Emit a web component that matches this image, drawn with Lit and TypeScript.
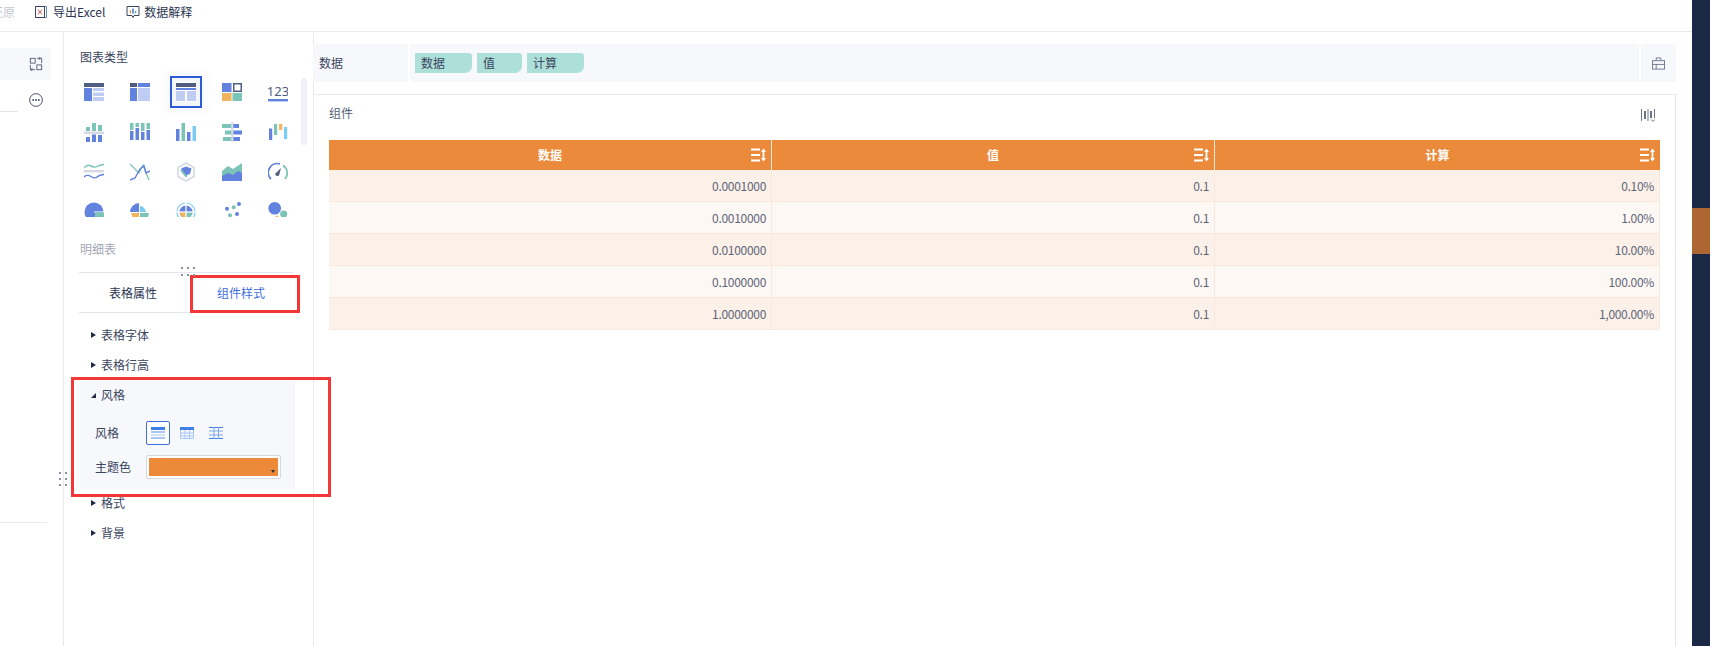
import { LitElement, html, css, svg } from "lit";
import { customElement } from "lit/decorators.js";

const B = "#6282e0", L = "#bfcdf5", D = "#4f5e80", T = "#7cc4b8", O = "#f0b45f", S = "#7ccbf5", G = "#d5d9e3";

const r = (x: number, y: number, w: number, h: number, f: string) =>
  svg`<rect x=${x} y=${y} width=${w} height=${h} fill=${f}></rect>`;

const chartIcons = [
  svg`${r(0,1,20,4,D)}${r(0,6,8,13,B)}${r(9,6,11,3,L)}${r(9,10.5,11,3.5,L)}${r(9,15,11,4,L)}`,
  svg`${r(0,1,7,4,D)}${r(8,1,12,4,B)}${r(0,6,7,13,B)}${r(8,6,12,13,L)}`,
  svg`${r(0,1,20,4,D)}${r(0,6,20,2,B)}${r(0,9,9,10,L)}${r(11,9,9,10,L)}`,
  svg`${r(0,1,9.5,9,B)}${r(11,1,9,9,D)}${r(12.5,2.5,6,6,"#fff")}${r(0,11,9.5,8,O)}${r(10.5,11,9.5,8,T)}`,
  svg`<text x="10" y="13.500" text-anchor="middle" class="num">123</text>${r(0,17,20,2.4,B)}`,

  svg`${r(2,5,4,4,T)}${r(8,1,4,8,T)}${r(14,3,4,6,T)}${r(0,9.5,20,2.5,G)}${r(2,15,4,5,B)}${r(8,12.5,4,7.5,B)}${r(14,13,4,7,B)}`,
  svg`${r(0,1,3.5,7,T)}${r(5.5,1,3.5,4,T)}${r(11,1,3.5,8,T)}${r(16.5,1,3.5,6,T)}${r(0,9,3.5,9,B)}${r(5.5,6,3.5,12,B)}${r(11,10,3.5,8,B)}${r(16.5,8,3.5,10,B)}`,
  svg`${r(0,7,3.5,12,B)}${r(5.5,1,3.5,18,T)}${r(11,10,3.5,9,B)}${r(16.5,4,3.5,15,S)}`,
  svg`${r(0,2,10,4,T)}${r(3,8.5,7,4,T)}${r(1,15,9,4,T)}${r(11,2,6,4,B)}${r(11,8.5,9,4,B)}${r(11,15,7,4,B)}${r(9.2,0,2.2,20,G)}`,
  svg`${r(1,6.500,3.2,11.5,B)}${r(6,2,3.2,11,T)}${r(11,2,3.2,6,O)}${r(16,5,3.2,12,S)}`,

  svg`<path d="M0 6 Q3 2 7 4 T13 4.500 T20 2.500" fill="none" stroke=${T} stroke-width="1.4"></path>${r(0,8,20,2.4,G)}<path d="M0 15 Q3 12 7 14.500 T13 15 T20 12.500" fill="none" stroke=${B} stroke-width="1.4"></path>`,
  svg`<path d="M0 2 L9 11 L13 3 L19 18" fill="none" stroke=${T} stroke-width="1.3"></path><path d="M0 18 L5 16 L10 7 L14 4 L16 11 L20 9" fill="none" stroke=${B} stroke-width="1.4"></path>`,
  svg`<path d="M10 1 L18 5.5 V14.5 L10 19 L2 14.5 V5.5 Z" fill="none" stroke=${G} stroke-width="1.6"></path><path d="M10 16 L4 8 L15 6 Z" fill=${T}></path><path d="M5 6.5 L10 4.5 L15.5 6.5 L14 12 L10 13 Z" fill=${B}></path>`,
  svg`<path d="M0 9 L6 4 L11 7 L17 3 L20 1 V14 H0 Z" fill=${T}></path><path d="M0 14 L6 11 L11 13 L16 9 L20 11 V19 H0 Z" fill=${B}></path>`,
  svg`<path d="M3 17 A9 9 0 0 1 12 2" fill="none" stroke=${B} stroke-width="1.8"></path><path d="M15 3.5 A9 9 0 0 1 17 17" fill="none" stroke=${T} stroke-width="1.8"></path><path d="M7 12 L13 6 L11 13.5 A2.7 2.7 0 0 1 7 12 Z" fill=${D}></path>`,

  svg`<circle cx="10" cy="10" r="9.500" fill=${B}></circle>${r(10,9.5,10,1,"#fff")}${r(11,10.5,9,9.5,T)}`,
  svg`<path d="M9 1 A9.5 9.5 0 0 0 0 10 H9 Z" fill=${B}></path><path d="M10 4 A6.500 6.500 0 0 1 16 10 H10 Z" fill=${S}></path><path d="M1 11 H9 V19 H4 Z" fill=${O}></path><path d="M10 11 H19 L17 19 H10 Z" fill=${T}></path>`,
  svg`<circle cx="10" cy="10" r="9" fill="none" stroke=${S} stroke-width="1.200"></circle><circle cx="10" cy="10" r="6.500" fill=${B}></circle><path d="M10 10 H16.500 A6.500 6.500 0 0 1 10 16.500 Z" fill=${T}></path><path d="M10 10 V16.500 A6.500 6.500 0 0 1 3.500 10 Z" fill=${O}></path>${r(9.4,0,1.2,20,"#fff")}${r(0,9.4,20,1.2,"#fff")}`,
  svg`<circle cx="17" cy="2" r="2" fill=${B}></circle><circle cx="11.700" cy="5.300" r="2" fill=${T}></circle><circle cx="5" cy="6.700" r="2" fill=${B}></circle><circle cx="15" cy="12" r="2" fill=${B}></circle><circle cx="8" cy="13.300" r="2" fill=${T}></circle>`,
  svg`<circle cx="6.700" cy="6.300" r="6.300" fill=${B}></circle><circle cx="15.700" cy="12" r="3.600" fill=${T}></circle><circle cx="9" cy="15" r="1.500" fill=${O}></circle>`,
];

const SortIcon = svg`<svg class="sort" width="15" height="14" viewBox="0 0 15 14"><path d="M0 1.500h9M0 7h9M0 12.500h9" stroke="#fff" stroke-width="1.800" fill="none"></path><path d="M12.500 2v10" stroke="#fff" stroke-width="1.800"></path><path d="M10 4 12.500 .5 15 4zM10 10 12.500 13.500 15 10z" fill="#fff"></path></svg>`;

const rows = [
  ["0.0001000", "0.1", "0.10%"],
  ["0.0010000", "0.1", "1.00%"],
  ["0.0100000", "0.1", "10.00%"],
  ["0.1000000", "0.1", "100.00%"],
  ["1.0000000", "0.1", "1,000.00%"],
];

@customElement("app-root")
export class AppRoot extends LitElement {
  static styles = css`
    :host {
      display: block;
      width: 1710px;
      height: 646px;
      overflow: hidden;
      position: relative;
      background: #fff;
      font-family: "Noto Sans CJK SC", "Noto Sans", sans-serif;
      font-size: 12px;
      color: #2c3650;
      line-height: 16px;
    }
    .page { display: flex; height: 646px; }
    .work { width: 1692px; display: flex; flex-direction: column; }
    .side { width: 18px; background: #1b2845; padding-top: 208px; box-sizing: border-box; }
    .side-mark { height: 46px; background: #ae6632; }

    .toolbar { height: 24px; padding-bottom: 7px; border-bottom: 1px solid #e7e9ef; display: flex; align-items: center; box-sizing: content-box; flex: none; }
    .tb-clip { width: 15px; overflow: hidden; display: flex; justify-content: flex-end; color: #c4c8d2; white-space: nowrap; }
    .tb-item { display: flex; align-items: center; color: #2c3650; }
    .tb-excel { margin-left: 19px; gap: 5px; }
    .tb-explain { margin-left: 21px; gap: 4px; }

    .body { flex: 1; display: flex; min-height: 0; }
    .left { width: 63px; border-right: 1px solid #e7e9ef; padding-top: 16px; flex: none; box-sizing: content-box; }
    .left-row { width: 51px; height: 32px; background: #f7f8fc; display: flex; align-items: center; justify-content: flex-end; padding-right: 8px; box-sizing: border-box; }
    .left-more { width: 51px; height: 31px; display: flex; align-items: flex-end; justify-content: flex-end; padding: 0 8px 4px 0; box-sizing: border-box; }
    .left-rule { width: 18px; height: 1px; background: #e0e3ea; }
    .left-rule2 { width: 47px; height: 1px; background: #e7e9ef; margin-top: 410px; }

    .panel { width: 249px; border-right: 1px solid #e7e9ef; flex: none; box-sizing: content-box; padding-top: 17px; position: relative; }
    .title { padding-left: 16px; height: 16px; color: #3b4560; }
    .gridwrap { height: 152px; overflow: hidden; padding: 7px 0 0 7px; box-sizing: border-box; position: relative; }
    .charts { display: grid; grid-template-columns: repeat(5, 46px); grid-auto-rows: 40px; }
    .chart { display: flex; align-items: center; justify-content: center; }
    .chart.sel svg { outline: 2px solid #2d5bd7; outline-offset: 4px; box-shadow: 0 0 10px 8px rgba(90, 110, 170, 0.08); }
    .num { font-family: "Noto Sans", sans-serif; font-size: 13px; fill: #4f5e80; }
    .scroll { position: absolute; left: 237px; top: 13px; width: 6px; height: 67px; background: #eef0f5; border-radius: 3px; }
    .subtitle { padding-left: 16px; margin-top: 24px; color: #a3a8b5; height: 16px; }
    .split { margin: 15px 19px 0 15px; height: 1px; background: #e4e7f0; }
    .tabs { display: grid; grid-template-columns: 108px 108px; margin: 0 19px 0 15px; height: 39px; border-bottom: 1px solid #e4e7f0; align-items: center; text-align: center; }
    .tab-on { color: #3f6ee0; }
    .tree { padding: 7px 0 0 16px; }
    .node { height: 30px; display: flex; align-items: center; gap: 5px; padding-left: 11px; color: #3b4560; }
    .tri { width: 0; height: 0; border-left: 5px solid #1f2a45; border-top: 3.5px solid transparent; border-bottom: 3.5px solid transparent; }
    .tri-open { width: 0; height: 0; border-right: 5px solid #1f2a45; border-top: 5px solid transparent; }
    .box { width: 215px; height: 108px; background: #f7f8fc; margin-top: 1px; box-sizing: border-box; }
    .box .node { height: 28px; }
    .box-row { display: flex; align-items: center; padding-left: 15px; }
    .box-label { width: 51px; color: #3b4560; }
    .style-row { margin-top: 12px; height: 24px; }
    .style-btn { width: 24px; height: 24px; border: 1px solid #3f6ee0; border-radius: 2px; box-sizing: border-box; display: flex; align-items: center; justify-content: center; background: #fff; }
    .style-plain { margin-left: 10px; display: flex; }
    .style-plain + .style-plain { margin-left: 15px; }
    .theme-row { margin-top: 10px; height: 24px; }
    .select { width: 135px; height: 24px; border: 1px solid #d5d8e0; border-radius: 2px; padding: 2px; box-sizing: border-box; background: #fff; }
    .swatch { height: 100%; background: #ed8a3a; display: flex; align-items: flex-end; justify-content: flex-end; padding: 0 3px 3px 0; box-sizing: border-box; }
    .caret { width: 0; height: 0; border-top: 3px solid #333; border-left: 2.5px solid transparent; border-right: 2.5px solid transparent; }
    .after { margin-top: -1px; }

    .main { flex: 1; margin-left: -1px; display: flex; flex-direction: column; padding-top: 12px; padding-right: 16px; min-width: 0; position: relative; }
    .databar { height: 38px; display: flex; background: #f7f8fc; flex: none; }
    .db-label { display: flex; align-items: center; padding-left: 6px; color: #3b4560; border-right: 2px solid #fff; width: 89px; box-sizing: content-box; }
    .db-tags { flex: 1; display: flex; gap: 5px; padding: 9px 0 0 5px; }
    .tag { height: 20px; background: #aee0da; padding-left: 6px; box-sizing: border-box; border-radius: 0 3px 7px 0; display: flex; align-items: center; color: #3b4560; }
    .db-tool { width: 35px; border-left: 2px solid #fff; display: flex; align-items: center; justify-content: center; flex: none; }
    .card { margin-top: 12px; flex: 1; border: 1px solid #e6e9f2; border-bottom: 0; padding: 0 15px 0 15px; }
    .card-head { height: 45px; display: flex; align-items: flex-start; justify-content: space-between; padding: 10px 5px 0 0; box-sizing: border-box; color: #555f77; }
    .card-head svg { margin-top: 3px; }
    .table { display: grid; grid-template-columns: 443px 443px 445px; }
    .th { height: 30px; background: #eb8a3a; color: #fff; font-weight: 700; display: flex; align-items: center; justify-content: center; position: relative; border-right: 1px solid #fbe9da; box-sizing: border-box; }
    .th:nth-child(3) { border-right: 0; }
    .sort { position: absolute; right: 5px; top: 8px; }
    .td { height: 32px; text-align: right; padding: 0 5px 0 0; line-height: 32px; letter-spacing: -0.3px; color: #5e6478; border-right: 1px solid #f9e9dd; border-bottom: 1px solid #f9e9dd; box-sizing: border-box; }
    .odd { background: #fcf1e9; }
    .even { background: #fdf8f4; }

    .redbox { position: absolute; border: 3px solid #f33636; box-sizing: border-box; pointer-events: none; }
    .red1 { left: 190px; top: 275px; width: 110px; height: 38px; }
    .red2 { left: 71px; top: 377px; width: 260px; height: 120px; }
    .grip { position: absolute; display: grid; gap: 5px 4px; }
    .grip i { width: 2px; height: 2px; background: #8b91a2; display: block; }
    .grip1 { left: 181px; top: 267px; grid-template-columns: repeat(3, 2px); }
    .grip2 { left: 59px; top: 472px; gap: 4px 4px; grid-template-columns: repeat(2, 2px); }
  `;

  render() {
    return html`
      <div class="page">
        <div class="work">
          <div class="toolbar">
            <div class="tb-clip"><span>还原</span></div>
            <div class="tb-item tb-excel">
              <svg width="14" height="14" viewBox="0 0 14 14"><rect x="1.500" y="1.500" width="9" height="11" fill="none" stroke="#3b4560"></rect><path d="M4 4.500l4 5M8 4.500l-4 5" stroke="#d0574f" fill="none"></path><path d="M11 1.500h1.500v11H11" stroke="#5b8fd0" fill="none"></path></svg>
              <span>导出Excel</span>
            </div>
            <div class="tb-item tb-explain">
              <svg width="14" height="14" viewBox="0 0 14 14"><path d="M1 1.500h12v9H8l-1 2-1-2H1z" fill="none" stroke="#3b4560"></path><path d="M4.500 5v3.500" stroke="#e2a046" stroke-width="1.400"></path><path d="M7 3.500v5" stroke="#3f6ee0" stroke-width="1.400"></path><path d="M9.500 6v2.500" stroke="#5ab5a8" stroke-width="1.400"></path></svg>
              <span>数据解释</span>
            </div>
          </div>
          <div class="body">
            <div class="left">
              <div class="left-row">
                <svg width="14" height="14" viewBox="0 0 16 16" fill="none" stroke="#4f5870"><rect x="1.500" y="1.500" width="5.500" height="5.500"></rect><rect x="9" y="9" width="5.500" height="5.500"></rect><path d="M1.500 9v5.500H7M9 1.500h5.500V7M11.500 0l2 1.500-2 1.500M4 16l-2-1.500L4 13"></path></svg>
              </div>
              <div class="left-more">
                <svg width="14" height="14" viewBox="0 0 15 15"><circle cx="7.500" cy="7.500" r="6.800" fill="none" stroke="#3b4560"></circle><circle cx="4.500" cy="7.500" r="1" fill="#3b4560"></circle><circle cx="7.500" cy="7.500" r="1" fill="#3b4560"></circle><circle cx="10.500" cy="7.500" r="1" fill="#3b4560"></circle></svg>
              </div>
              <div class="left-rule"></div>
              <div class="left-rule2"></div>
            </div>
            <div class="panel">
              <div class="title">图表类型</div>
              <div class="gridwrap">
                <div class="charts">
                  ${chartIcons.map((ic, i) => html`<div class="chart ${i === 2 ? "sel" : ""}"><svg width="20" height="20" viewBox="0 0 20 20">${ic}</svg></div>`)}
                </div>
                <div class="scroll"></div>
              </div>
              <div class="subtitle">明细表</div>
              <div class="split"></div>
              <div class="tabs"><span>表格属性</span><span class="tab-on">组件样式</span></div>
              <div class="tree">
                <div class="node"><span class="tri"></span>表格字体</div>
                <div class="node"><span class="tri"></span>表格行高</div>
                <div class="box">
                  <div class="node"><span class="tri-open"></span>风格</div>
                  <div class="box-row style-row">
                    <span class="box-label">风格</span>
                    <span class="style-btn"><svg width="14" height="12" viewBox="0 0 14 12"><rect width="14" height="3" fill="#3f7fe8"></rect><rect y="4" width="14" height="2" fill="#a9c7f5"></rect><rect y="7" width="14" height="2" fill="#d4e2f8"></rect><rect y="10" width="14" height="2" fill="#a9c7f5"></rect></svg></span>
                    <span class="style-plain"><svg width="14" height="12" viewBox="0 0 14 12"><rect width="14" height="3" fill="#3f7fe8"></rect><path d="M.5 3v8.500h13V3M.5 6h13M.5 9h13M5 3v9M9.500 3v9" fill="none" stroke="#a9c7f5"></path></svg></span>
                    <span class="style-plain"><svg width="14" height="12" viewBox="0 0 14 12"><path d="M0 .5h14M0 11.500h14" stroke="#3f7fe8"></path><path d="M0 4h14M0 8h14M5 0v12M9.500 0v12" stroke="#7fa9ee"></path></svg></span>
                  </div>
                  <div class="box-row theme-row">
                    <span class="box-label">主题色</span>
                    <div class="select"><div class="swatch"><span class="caret"></span></div></div>
                  </div>
                </div>
                <div class="node after"><span class="tri"></span>格式</div>
                <div class="node"><span class="tri"></span>背景</div>
              </div>
            </div>
            <div class="main">
              <div class="databar">
                <div class="db-label">数据</div>
                <div class="db-tags">
                  <span class="tag" style="width:57px">数据</span>
                  <span class="tag" style="width:45px">值</span>
                  <span class="tag" style="width:57px">计算</span>
                </div>
                <div class="db-tool">
                  <svg width="13" height="13" viewBox="0 0 14 13" fill="none" stroke="#6b7488"><rect x=".5" y="3.500" width="13" height="9"></rect><path d="M4.500 3.500V.5h5v3M.5 7.500h13M4.500 7.500v5"></path></svg>
                </div>
              </div>
              <div class="card">
                <div class="card-head">
                  <span>组件</span>
                  <svg width="14" height="14" viewBox="0 0 14 14" fill="none" stroke="#6b7488"><path d="M.5 1v12M13.500 1v9M7 1v12"></path><rect x="3" y="3" width="2" height="8" fill="#6b7488" stroke="none"></rect><rect x="9" y="3" width="2" height="7" fill="#6b7488" stroke="none"></rect><path d="M10 11.500l2 2 2-2"></path></svg>
                </div>
                <div class="table">
                  ${["数据", "值", "计算"].map((h) => html`<div class="th">${h}${SortIcon}</div>`)}
                  ${rows.map((row, i) => row.map((c) => html`<div class="td ${i % 2 ? "even" : "odd"}">${c}</div>`))}
                </div>
              </div>
            </div>
          </div>
        </div>
        <div class="side"><div class="side-mark"></div></div>
      </div>
      <div class="redbox red1"></div>
      <div class="redbox red2"></div>
      <div class="grip grip1">${[0, 1, 2, 3, 4, 5].map(() => html`<i></i>`)}</div>
      <div class="grip grip2">${[0, 1, 2, 3, 4, 5].map(() => html`<i></i>`)}</div>
    `;
  }
}
